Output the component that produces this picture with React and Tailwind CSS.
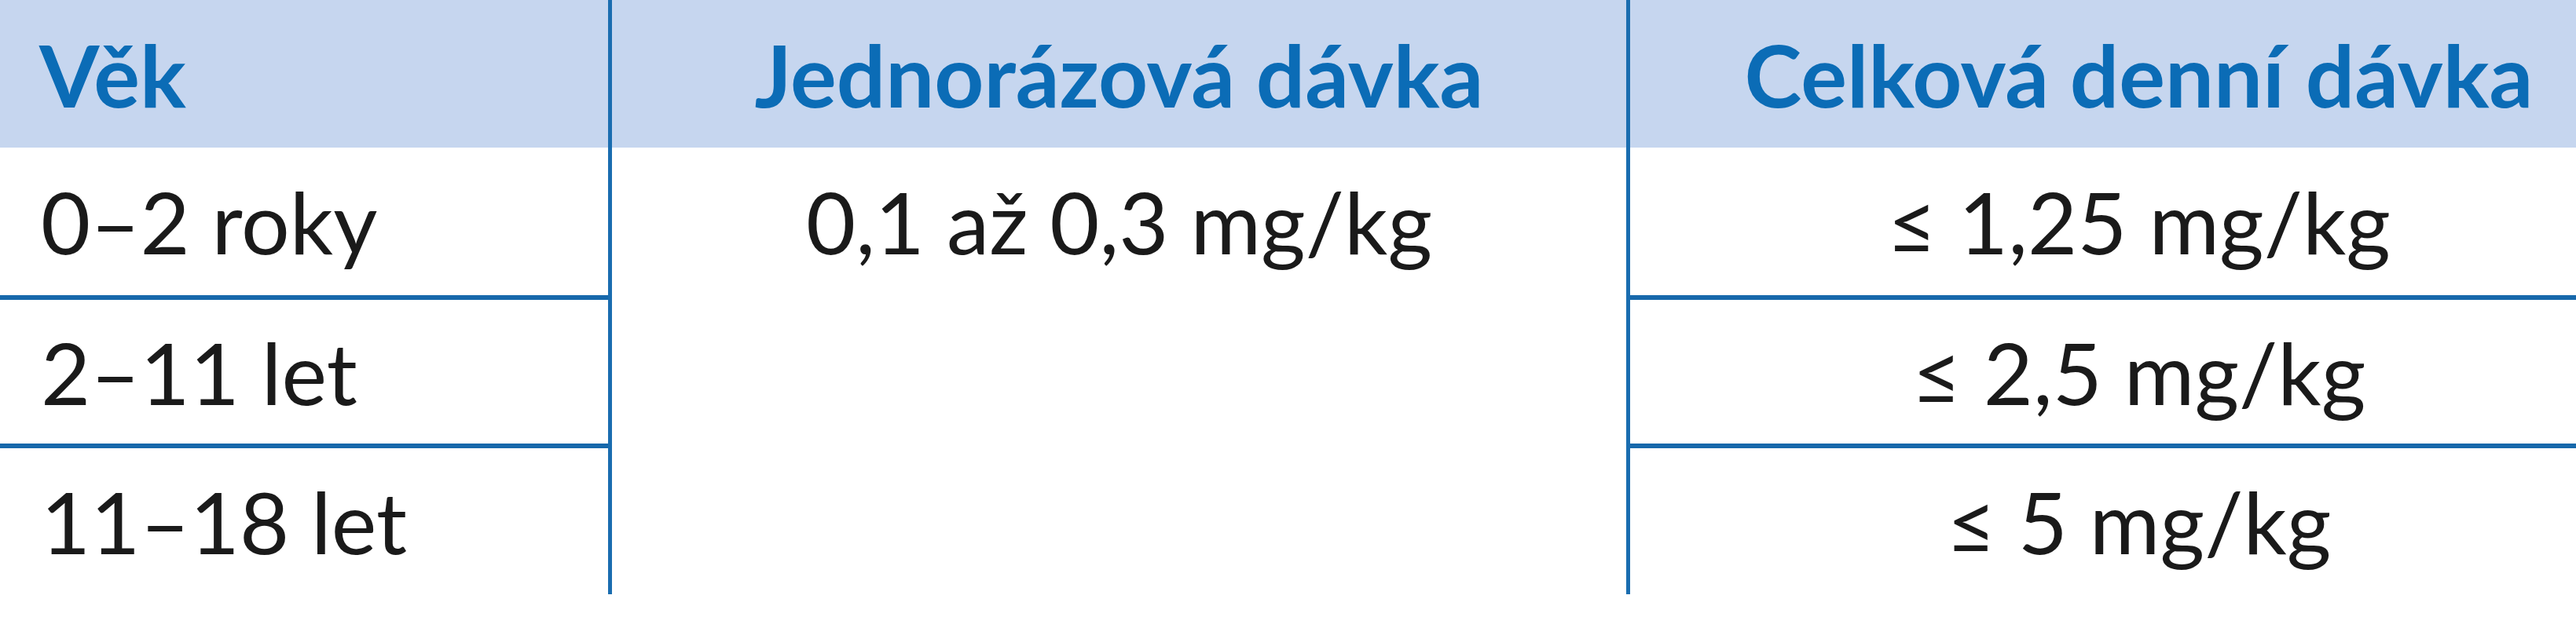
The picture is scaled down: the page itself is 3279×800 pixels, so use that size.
const rows = [
  { age: '0–2 roky', total: '≤ 1,25 mg/kg' },
  { age: '2–11 let', total: '≤ 2,5 mg/kg' },
  { age: '11–18 let', total: '≤ 5 mg/kg' },
]

const heights = ['h-[188px]', 'h-[189px]', 'h-[191px]']

export default function App() {
  return (
    <div className="w-[3279px] h-[800px] overflow-hidden bg-white" style={{ fontFamily: 'Lato, "Open Sans", sans-serif' }}>
      <div className="flex w-[3370px]">
        {/* Věk */}
        <div className="w-[774px] flex flex-col">
          <div className="h-[188px] bg-[#c6d6ef] flex items-center pl-[50px] text-[110px] font-bold text-[#0b6cb6]">Věk</div>
          {rows.map((r, i) => (
            <div key={r.age} className={`${heights[i]} ${i > 0 ? 'border-t-[6px] border-[#1768ab]' : ''} flex items-center pl-[52px] text-[109px] text-[#1a1a1a]`}>
              {r.age}
            </div>
          ))}
        </div>

        {/* Jednorázová dávka */}
        <div className="w-[1301px] flex flex-col border-x-[5px] border-[#1a6db0] h-[757px]">
          <div className="h-[188px] bg-[#c6d6ef] flex items-center justify-center text-[110px] font-bold text-[#0b6cb6]">Jednorázová dávka</div>
          <div className="h-[188px] flex items-center justify-center text-[109px] text-[#1a1a1a]">0,1 až 0,3 mg/kg</div>
        </div>

        {/* Celková denní dávka */}
        <div className="flex-1 flex flex-col">
          <div className="h-[188px] bg-[#c6d6ef] flex items-center justify-center text-[110px] font-bold text-[#0b6cb6]">Celková denní dávka</div>
          {rows.map((r, i) => (
            <div key={r.total} className={`${heights[i]} ${i > 0 ? 'border-t-[6px] border-[#1768ab]' : ''} flex items-center justify-center text-[109px] text-[#1a1a1a]`}>
              {r.total}
            </div>
          ))}
        </div>
      </div>
    </div>
  )
}
